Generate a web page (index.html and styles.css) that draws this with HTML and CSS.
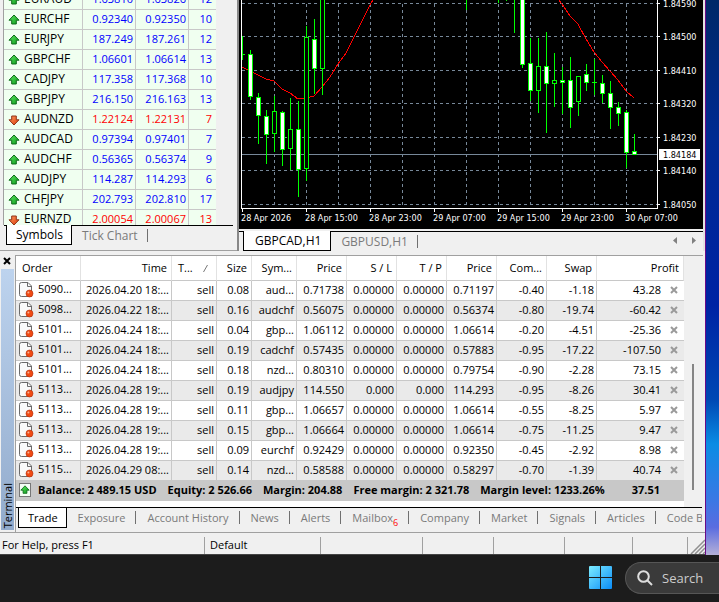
FILE: index.html
```html
<!DOCTYPE html>
<html lang="en">
<head>
  <meta charset="UTF-8" />
  <meta name="viewport" content="width=device-width, initial-scale=1.0"/>
  <title>Trading Terminal</title>
  <link rel="stylesheet" href="styles.css">
</head>
<body>
  <!-- shared icons -->
  <svg class="defs" width="0" height="0">
    <defs>
      <linearGradient id="green" x1="0" y1="0" x2="1" y2="1">
        <stop offset="0" stop-color="#5fe860"/>
        <stop offset="1" stop-color="#0a9a1c"/>
      </linearGradient>
      <linearGradient id="orange" x1="0" y1="0" x2="1" y2="1">
        <stop offset="0" stop-color="#ff9a5c"/>
        <stop offset="1" stop-color="#dd3a0c"/>
      </linearGradient>
      <linearGradient id="win" x1="0" y1="0" x2="1" y2="1">
        <stop offset="0" stop-color="#7cecff"/>
        <stop offset="1" stop-color="#0a8cf8"/>
      </linearGradient>
      <symbol id="up" viewBox="0 0 12 12">
        <path d="M6 1 L11 6.2 H8.3 V10 H3.7 V6.2 H1 Z" fill="url(#green)" stroke="#0c6a18"/>
      </symbol>
      <symbol id="down" viewBox="0 0 12 12">
        <path d="M6 11 L11 5.8 H8.3 V2 H3.7 V5.8 H1 Z" fill="url(#orange)" stroke="#8e3418"/>
      </symbol>
      <symbol id="doc" viewBox="0 0 15 16">
        <path d="M2.5 .5 H9 L12.5 4 V14.5 H2.5 Q.5 14.5 .5 12.5 V2.5 Q.5 .5 2.5 .5 Z" fill="#fafafa" stroke="#6b6b6b"/>
        <path d="M8.5 .5 V4.5 H12.5" fill="none" stroke="#6b6b6b"/>
        <circle cx="10.5" cy="11.5" r="3.5" fill="#f04a14" stroke="#b02c08" stroke-width=".6"/>
        <circle cx="9.4" cy="10.4" r="1" fill="#ffb090"/>
      </symbol>
      <symbol id="cross" viewBox="0 0 8 8">
        <path d="M1 1 L7 7 M7 1 L1 7" stroke="currentColor" stroke-width="2"/>
      </symbol>
    </defs>
  </svg>

  <div class="desktop">
    <main class="app">
      <div class="workspace">
        <section class="market">
          <div class="market-view">
            <table class="quotes">
              <colgroup><col class="q-name"><col class="q-price"><col class="q-price"><col></colgroup>
              <tr><td><svg><use href="#up"/></svg>EURAUD</td><td>1.63810</td><td>1.63826</td><td>12</td></tr>
              <tr><td><svg><use href="#up"/></svg>EURCHF</td><td>0.92340</td><td>0.92350</td><td>10</td></tr>
              <tr><td><svg><use href="#up"/></svg>EURJPY</td><td>187.249</td><td>187.261</td><td>12</td></tr>
              <tr><td><svg><use href="#up"/></svg>GBPCHF</td><td>1.06601</td><td>1.06614</td><td>13</td></tr>
              <tr><td><svg><use href="#up"/></svg>CADJPY</td><td>117.358</td><td>117.368</td><td>10</td></tr>
              <tr><td><svg><use href="#up"/></svg>GBPJPY</td><td>216.150</td><td>216.163</td><td>13</td></tr>
              <tr class="fall"><td><svg><use href="#down"/></svg>AUDNZD</td><td>1.22124</td><td>1.22131</td><td>7</td></tr>
              <tr><td><svg><use href="#up"/></svg>AUDCAD</td><td>0.97394</td><td>0.97401</td><td>7</td></tr>
              <tr><td><svg><use href="#up"/></svg>AUDCHF</td><td>0.56365</td><td>0.56374</td><td>9</td></tr>
              <tr><td><svg><use href="#up"/></svg>AUDJPY</td><td>114.287</td><td>114.293</td><td>6</td></tr>
              <tr><td><svg><use href="#up"/></svg>CHFJPY</td><td>202.793</td><td>202.810</td><td>17</td></tr>
              <tr class="fall"><td><svg><use href="#down"/></svg>EURNZD</td><td>2.00054</td><td>2.00067</td><td>13</td></tr>
            </table>
          </div>
          <div class="tabs market-tabs">
            <button class="tab active">Symbols</button>
            <button class="tab">Tick Chart</button>
          </div>
        </section>

        <section class="chart-pane">
          <div class="chart">
            <svg viewBox="239 0 464 229" width="464" height="229" shape-rendering="crispEdges">
              <!-- grid -->
              <path class="grid" d="M242 3.5H657M242 36.5H657M242 70.5H657M242 103.5H657M242 137.5H657M242 170.5H657M242 204.5H657"/>
              <path class="grid" d="M274.5 4V208M306.5 4V208M338.5 4V208M370.5 4V208M402.5 4V208M434.5 4V208M466.5 4V208M498.5 4V208M530.5 4V208M562.5 4V208M594.5 4V208M626.5 4V208"/>
              <path class="level" d="M242 154.5H657"/>
              <!-- moving average -->
              <path class="ma" d="M242 67L250 71L258 75L266 79L274 81L282 89L290 93L298 99L306 98L314 96L322 87L330 77L338 64L346 53L354 37L362 21L370 5L373 0"/>
              <path class="ma" d="M559 0L562 4L570 16L578 24L586 39L594 52L602 62L610 71L618 80L626 91L634 98"/>
              <!-- wicks -->
              <path class="wick" d="M242.5 36V60M242 54.5H245M250.5 50V100M258.5 93V144M266.5 110V164M274.5 96V152M282.5 111V166M290.5 98V170M298.5 101V197M306.5 26V181M314.5 19V94M322.5 0V95"/>
              <path class="wick" d="M466.5 0V10M498.5 0V3M506.5 0V1M514.5 0V33M522.5 0V68M530.5 38V101M538.5 38V113M546.5 32V133M554.5 53V107M562.5 67V114M570.5 57V128M578.5 76V116M586.5 64V91M594.5 59V95M592 82.5H597M602.5 75V103M610.5 81V129M618.5 102V126M626.5 110V168M634.5 134V154"/>
              <!-- bodies: rising are hollow, falling are filled -->
              <path class="rise" d="M272.5 111.5h4v22h-4zM288.5 129.5h4v19h-4zM304.5 37.5h4v131h-4zM320.5 -5.5h4v74h-4zM536.5 66.5h4v24h-4zM552.5 80.5h4v3h-4zM576.5 76.5h4v25h-4z"/>
              <path class="drop" d="M248.5 54.5h4v42h-4zM256.5 97.5h4v18h-4zM264.5 116.5h4v18h-4zM280.5 112.5h4v37h-4zM296.5 129.5h4v40h-4zM312.5 39.5h4v29h-4z"/>
              <path class="drop" d="M520.5 -5.5h4v70h-4zM528.5 63.5h4v27h-4zM544.5 66.5h4v17h-4zM560.5 80.5h4v2h-4zM568.5 80.5h4v27h-4zM584.5 74.5h4v8h-4zM600.5 83.5h4v10h-4zM608.5 93.5h4v14h-4zM616.5 107.5h4v6h-4zM624.5 112.5h4v40h-4zM632.5 151.5h4v3h-4z"/>
              <!-- axes -->
              <path class="axis" d="M241.5 0V208.5H657.5V0M658 3.5h2M658 36.5h2M658 70.5h2M658 103.5h2M658 137.5h2M658 170.5h2M658 204.5h2"/>
              <path class="axis" d="M242.5 209v3M306.5 209v3M370.5 209v3M434.5 209v3M498.5 209v3M562.5 209v3M626.5 209v3"/>
              <rect x="659" y="149" width="41" height="11" fill="#fff"/>
              <g class="label">
                <text x="663" y="7">1.84590</text>
                <text x="663" y="40">1.84500</text>
                <text x="663" y="74">1.84410</text>
                <text x="663" y="107">1.84320</text>
                <text x="663" y="141">1.84230</text>
                <text x="663" y="158" class="current">1.84184</text>
                <text x="663" y="174">1.84140</text>
                <text x="663" y="208">1.84050</text>
                <text x="241" y="221">28 Apr 2026</text>
                <text x="305" y="221">28 Apr 15:00</text>
                <text x="369" y="221">28 Apr 23:00</text>
                <text x="433" y="221">29 Apr 07:00</text>
                <text x="497" y="221">29 Apr 15:00</text>
                <text x="561" y="221">29 Apr 23:00</text>
                <text x="625" y="221">30 Apr 07:00</text>
              </g>
            </svg>
          </div>
          <div class="tabs chart-tabs">
            <button class="tab active">GBPCAD,H1</button>
            <button class="tab">GBPUSD,H1</button>
            <div class="scroll-buttons">
              <button aria-label="Previous chart"><svg width="4" height="7" viewBox="0 0 4 7"><path d="M4 0V7L0 3.5Z"/></svg></button>
              <button aria-label="Next chart"><svg width="4" height="7" viewBox="0 0 4 7"><path d="M0 0V7L4 3.5Z"/></svg></button>
            </div>
          </div>
        </section>
      </div>

      <section class="terminal">
        <div class="gutter">
          <button class="close" aria-label="Close"><svg width="8" height="8"><use href="#cross"/></svg></button>
          <div class="caption"><span>Terminal</span></div>
        </div>
        <div class="terminal-body">
          <div class="trade-view">
            <div class="orders-wrap">
              <table class="orders">
                <colgroup>
                  <col class="c-order"><col class="c-time"><col class="c-mid"><col class="c-size"><col class="c-mid">
                  <col class="c-num"><col class="c-num"><col class="c-num"><col class="c-num"><col class="c-num"><col class="c-num"><col>
                </colgroup>
                <thead>
                  <tr><th class="left">Order</th><th>Time</th><th class="left">T...<svg class="sort" width="5" height="7" viewBox="0 0 5 7"><path d="M.5 7L4.5 0" stroke="#777"/></svg></th><th>Size</th><th>Sym...</th><th>Price</th><th>S / L</th><th>T / P</th><th>Price</th><th>Com...</th><th>Swap</th><th>Profit</th></tr>
                </thead>
                <tbody>
                  <tr><td><svg><use href="#doc"/></svg>5090...</td><td>2026.04.20 18:...</td><td>sell</td><td>0.08</td><td>aud...</td><td>0.71738</td><td>0.00000</td><td>0.00000</td><td>0.71197</td><td>-0.40</td><td>-1.18</td><td>43.28<button aria-label="Close order"><svg><use href="#cross"/></svg></button></td></tr>
                  <tr><td><svg><use href="#doc"/></svg>5098...</td><td>2026.04.22 18:...</td><td>sell</td><td>0.16</td><td>audchf</td><td>0.56075</td><td>0.00000</td><td>0.00000</td><td>0.56374</td><td>-0.80</td><td>-19.74</td><td>-60.42<button aria-label="Close order"><svg><use href="#cross"/></svg></button></td></tr>
                  <tr><td><svg><use href="#doc"/></svg>5101...</td><td>2026.04.24 18:...</td><td>sell</td><td>0.04</td><td>gbp...</td><td>1.06112</td><td>0.00000</td><td>0.00000</td><td>1.06614</td><td>-0.20</td><td>-4.51</td><td>-25.36<button aria-label="Close order"><svg><use href="#cross"/></svg></button></td></tr>
                  <tr><td><svg><use href="#doc"/></svg>5101...</td><td>2026.04.24 18:...</td><td>sell</td><td>0.19</td><td>cadchf</td><td>0.57435</td><td>0.00000</td><td>0.00000</td><td>0.57883</td><td>-0.95</td><td>-17.22</td><td>-107.50<button aria-label="Close order"><svg><use href="#cross"/></svg></button></td></tr>
                  <tr><td><svg><use href="#doc"/></svg>5101...</td><td>2026.04.24 18:...</td><td>sell</td><td>0.18</td><td>nzd...</td><td>0.80310</td><td>0.00000</td><td>0.00000</td><td>0.79754</td><td>-0.90</td><td>-2.28</td><td>73.15<button aria-label="Close order"><svg><use href="#cross"/></svg></button></td></tr>
                  <tr><td><svg><use href="#doc"/></svg>5113...</td><td>2026.04.28 19:...</td><td>sell</td><td>0.19</td><td>audjpy</td><td>114.550</td><td>0.000</td><td>0.000</td><td>114.293</td><td>-0.95</td><td>-8.26</td><td>30.41<button aria-label="Close order"><svg><use href="#cross"/></svg></button></td></tr>
                  <tr><td><svg><use href="#doc"/></svg>5113...</td><td>2026.04.28 19:...</td><td>sell</td><td>0.11</td><td>gbp...</td><td>1.06657</td><td>0.00000</td><td>0.00000</td><td>1.06614</td><td>-0.55</td><td>-8.25</td><td>5.97<button aria-label="Close order"><svg><use href="#cross"/></svg></button></td></tr>
                  <tr><td><svg><use href="#doc"/></svg>5113...</td><td>2026.04.28 19:...</td><td>sell</td><td>0.15</td><td>gbp...</td><td>1.06664</td><td>0.00000</td><td>0.00000</td><td>1.06614</td><td>-0.75</td><td>-11.25</td><td>9.47<button aria-label="Close order"><svg><use href="#cross"/></svg></button></td></tr>
                  <tr><td><svg><use href="#doc"/></svg>5113...</td><td>2026.04.28 19:...</td><td>sell</td><td>0.09</td><td>eurchf</td><td>0.92429</td><td>0.00000</td><td>0.00000</td><td>0.92350</td><td>-0.45</td><td>-2.92</td><td>8.98<button aria-label="Close order"><svg><use href="#cross"/></svg></button></td></tr>
                  <tr><td><svg><use href="#doc"/></svg>5115...</td><td>2026.04.29 08:...</td><td>sell</td><td>0.14</td><td>nzd...</td><td>0.58588</td><td>0.00000</td><td>0.00000</td><td>0.58297</td><td>-0.70</td><td>-1.39</td><td>40.74<button aria-label="Close order"><svg><use href="#cross"/></svg></button></td></tr>
                </tbody>
                <tfoot>
                  <tr>
                    <td colspan="11">
                      <div class="balance">
                        <span class="balance-icon"><svg><use href="#up"/></svg></span>
                        <span>Balance: 2 489.15 USD</span>
                        <span>Equity: 2 526.66</span>
                        <span>Margin: 204.88</span>
                        <span>Free margin: 2 321.78</span>
                        <span>Margin level: 1233.26%</span>
                      </div>
                    </td>
                    <td>37.51</td>
                  </tr>
                </tfoot>
              </table>
            </div>
            <div class="scrollbar"><div class="thumb"></div></div>
          </div>
          <div class="tabs terminal-tabs">
            <button class="tab active">Trade</button>
            <button class="tab">Exposure</button>
            <button class="tab">Account History</button>
            <button class="tab">News</button>
            <button class="tab">Alerts</button>
            <button class="tab">Mailbox<sub>6</sub></button>
            <button class="tab">Company</button>
            <button class="tab">Market</button>
            <button class="tab">Signals</button>
            <button class="tab">Articles</button>
            <button class="tab">Code Base</button>
          </div>
        </div>
      </section>

      <footer class="status">
        <span>For Help, press F1</span>
        <span>Default</span>
        <span></span>
        <span></span>
        <span></span>
        <span></span>
        <span></span>
        <svg width="15" height="15" viewBox="0 0 15 15"><path d="M1 15L15 1M5 15L15 5M9 15L15 9M13 15L15 13" stroke="#909090" stroke-width="1.5"/></svg>
      </footer>
    </main>
    <div class="wallpaper"></div>
  </div>

  <div class="taskbar">
    <button class="start" aria-label="Start">
      <svg width="23" height="23" viewBox="0 0 23 23"><path d="M1 0H11V11H0V1Q0 0 1 0ZM12 0H22Q23 0 23 1V11H12ZM0 12H11V23H1Q0 23 0 22ZM12 12H23V22Q23 23 22 23H12Z" fill="url(#win)"/></svg>
    </button>
    <label class="search">
      <svg width="16" height="16" viewBox="0 0 16 16" fill="none" stroke="#ddd" stroke-width="2"><circle cx="6.5" cy="6.5" r="5.3"/><path d="M10.5 10.5L15 15"/></svg>
      <input type="search" placeholder="Search" aria-label="Search">
    </label>
  </div>
</body>
</html>
```

FILE: styles.css
```css
* {
  box-sizing: border-box;
}

body {
  margin: 0;
  min-height: 100vh;
  display: flex;
  flex-direction: column;
  font-family: "Open Sans", "Noto Sans", sans-serif;
  font-size: 11px;
  line-height: 16px;
  color: #000;
  background-color: #1c1c1c;
  overflow: hidden;
}

button {
  font: inherit;
  margin: 0;
  padding: 0;
  border: none;
  background: none;
}

svg {
  display: block;
  flex-shrink: 0;
}

table {
  border-collapse: separate;
  border-spacing: 0;
  table-layout: fixed;
}

.defs {
  position: absolute;
}

.desktop {
  flex: 1;
  display: flex;
}

.app {
  flex: 1;
  min-width: 0;
  display: flex;
  flex-direction: column;
  background-color: #f0f0f0;
}

.wallpaper {
  width: 14px;
  border-left: 1px solid #6a0a86;
  background: linear-gradient(#002868, #002a92 25%, #0022a4 55%, #0048b4 72%, #0a8ce4 80%, #3a78e4 90%, #5a6ce0 95%, #b4b0d8);
}

.workspace {
  display: flex;
  height: 251px;
}

/* market watch */
.market {
  width: 237px;
  padding: 0 4px 0 3px;
  border-bottom: 1px solid #a0a0a0;
}

.market-view {
  height: 225px;
  overflow: hidden;
  border-left: 1px solid #a0a0a0;
}

.quotes {
  width: 212px;
  margin-top: -10px;
  background-color: #f0fff0;
}

.q-name {
  width: 79px;
}

.q-price {
  width: 53px;
}

.quotes td {
  height: 20px;
  padding: 0 2px 2px 0;
  line-height: 15px;
  border-right: 1px solid #c8c8c8;
  border-bottom: 1px solid #c8c8c8;
  text-align: right;
  color: #00f;
}

.quotes td:first-child {
  padding-left: 4px;
  text-align: left;
  font-size: 12px;
  color: #000;
}

.quotes td:last-child {
  padding-right: 4px;
  border-right: none;
}

.quotes .fall td:not(:first-child) {
  color: #f00;
}

.quotes svg {
  display: inline-block;
  width: 12px;
  height: 12px;
  margin-right: 4px;
  vertical-align: -3px;
}

/* tab strips */
.tabs {
  display: flex;
  align-items: flex-start;
  height: 21px;
  border-top: 1px solid #000;
}

.tab {
  flex-shrink: 0;
  height: 19px;
  padding: 0 10px;
  line-height: 18px;
  color: #7a7a7a;
  white-space: nowrap;
  position: relative;
}

.tab:not(.active):not(:last-child)::after,
.market-tabs .tab:last-child::after {
  content: "";
  position: absolute;
  right: 0;
  top: 3px;
  height: 13px;
  border-right: 1px solid #707070;
}

.tab.active {
  height: 20px;
  margin-top: -1px;
  color: #000;
  background-color: #fff;
  border: 1px solid #000;
  border-top: none;
}

.market-tabs {
  margin-left: 1px;
  padding-left: 2px;
  font-size: 12px;
}

.market-tabs .tab.active {
  padding: 0 8px 0 9px;
}

.chart-tabs {
  margin-top: 2px;
  padding-left: 4px;
  height: 20px;
  font-size: 12px;
}

.chart-tabs .tab.active {
  padding: 0 9px 0 11px;
}

/* chart */
.chart-pane {
  flex: 1;
  min-width: 0;
  border-left: 2px solid #888;
  border-right: 2px solid #e3e3e3;
}

.chart {
  background-color: #000;
}

.grid {
  stroke: #778899;
  stroke-dasharray: 3 3;
}

.level {
  stroke: #778899;
}

.ma {
  fill: none;
  stroke: #f00;
}

.wick {
  stroke: #0f0;
}

.rise {
  fill: #000;
  stroke: #0f0;
}

.drop {
  fill: #fff;
  stroke: #0f0;
}

.axis {
  fill: none;
  stroke: #fff;
}

.label {
  font-family: "DejaVu Sans Condensed", "DejaVu Sans", sans-serif;
  font-size: 9px;
  fill: #fff;
}

.label .current {
  fill: #000;
}

.scroll-buttons {
  display: flex;
  gap: 15px;
  margin-left: auto;
  padding: 5px 7px 0 0;
}

.scroll-buttons path {
  fill: #808080;
}

/* terminal */
.terminal {
  display: flex;
  height: 282px;
  padding: 4px 2px 0 0;
  border-bottom: 1px solid #a0a0a0;
}

.gutter {
  display: flex;
  flex-direction: column;
  width: 15px;
  padding: 0 1px 2px;
}

.close {
  display: flex;
  align-items: flex-start;
  height: 14px;
  padding: 2px 0 0 2px;
}

.caption {
  flex: 1;
  display: flex;
  align-items: center;
  padding-bottom: 2px;
  writing-mode: vertical-rl;
  background: linear-gradient(#bdd3ee, #92abcc);
}

.caption span {
  transform: rotate(180deg);
  margin-top: auto;
  line-height: 13px;
}

.terminal-body {
  flex: 1;
  min-width: 0;
  border-left: 1px solid #a0a0a0;
  border-top: 1px solid #a0a0a0;
}

.trade-view {
  display: flex;
  height: 251px;
}

.orders-wrap {
  flex: 1;
  min-width: 0;
  background-color: #fff;
}

.orders {
  width: 100%;
}

.c-order {
  width: 65px;
}

.c-time {
  width: 91px;
}

.c-mid {
  width: 45px;
}

.c-size {
  width: 35px;
}

.c-num {
  width: 50px;
}

.orders th {
  height: 25px;
  padding: 0 4px;
  font-weight: normal;
  text-align: right;
  white-space: nowrap;
  border-right: 1px solid #e2e2e2;
  border-bottom: 1px solid #c8c8c8;
}

.orders th.left {
  padding-left: 6px;
  text-align: left;
}

.sort {
  display: inline-block;
  margin-left: 10px;
}

.orders td {
  height: 20px;
  padding: 0 2px 2px;
  text-align: right;
  white-space: nowrap;
  border-right: 1px solid #c8c8c8;
  border-bottom: 1px solid #c8c8c8;
}

.orders tbody tr:nth-child(even) td {
  background-color: #eaeaea;
}

.orders td:first-child {
  padding-left: 3px;
  text-align: left;
}

.orders td:last-child {
  padding-right: 6px;
  border-right: none;
}

.orders tbody td:first-child svg {
  display: inline-block;
  width: 15px;
  height: 16px;
  margin-right: 4px;
  vertical-align: -5px;
}

.orders td button {
  margin-left: 9px;
  color: #9a9a9a;
}

.orders td button svg {
  width: 8px;
  height: 8px;
}

.orders tfoot td {
  font-weight: bold;
  background-color: #c8c8c8;
  border: none;
}

.orders tfoot td:last-child {
  padding-right: 24px;
}

.balance {
  display: flex;
  align-items: center;
  gap: 11px;
}

.balance-icon {
  width: 12px;
  height: 14px;
  margin-right: -4px;
  padding: 1px 0;
  background-color: #f4fff4;
  border: 1px solid #777;
}

.balance-icon svg {
  width: 10px;
  height: 10px;
}

.scrollbar {
  flex-shrink: 0;
  width: 19px;
  padding: 108px 0 0 8px;
}

.thumb {
  width: 2px;
  height: 126px;
  background-color: #858585;
}

.terminal-tabs {
  height: 23px;
  margin-right: 1px;
  padding-left: 2px;
  overflow: hidden;
}

.terminal-tabs .tab {
  padding: 0 11px;
  line-height: 17px;
}

.terminal-tabs .tab.active {
  margin-top: 0;
  padding: 0 8px 0 9px;
}

.tab sub {
  color: #f00;
  font-size: 9px;
  line-height: 9px;
  vertical-align: -4px;
}

/* status bar */
.status {
  flex: 1;
  display: grid;
  grid-template-columns: 205px 116px 102px 71px 71px 68px 1fr 17px;
  padding-top: 4px;
  border-bottom: 1px solid #444;
}

.status span {
  padding: 0 5px;
  border-right: 1px solid #a0a0a0;
}

.status span:first-child {
  padding-left: 2px;
}

.status svg {
  place-self: end;
}

/* taskbar */
.taskbar {
  display: flex;
  align-items: center;
  justify-content: flex-end;
  gap: 13px;
  height: 47px;
  padding-bottom: 2px;
}

.search {
  display: flex;
  align-items: center;
  gap: 9px;
  width: 94px;
  height: 32px;
  padding-left: 11px;
  background-color: #3a3a3a;
  border: 1px solid #565656;
  border-right: none;
  border-radius: 16px 0 0 16px;
}

.search input {
  flex: 1;
  min-width: 0;
  padding: 0;
  border: none;
  outline: none;
  background: none;
  font-family: inherit;
  font-size: 13px;
  color: #ccc;
}

.search input::placeholder {
  color: #ccc;
}
```
